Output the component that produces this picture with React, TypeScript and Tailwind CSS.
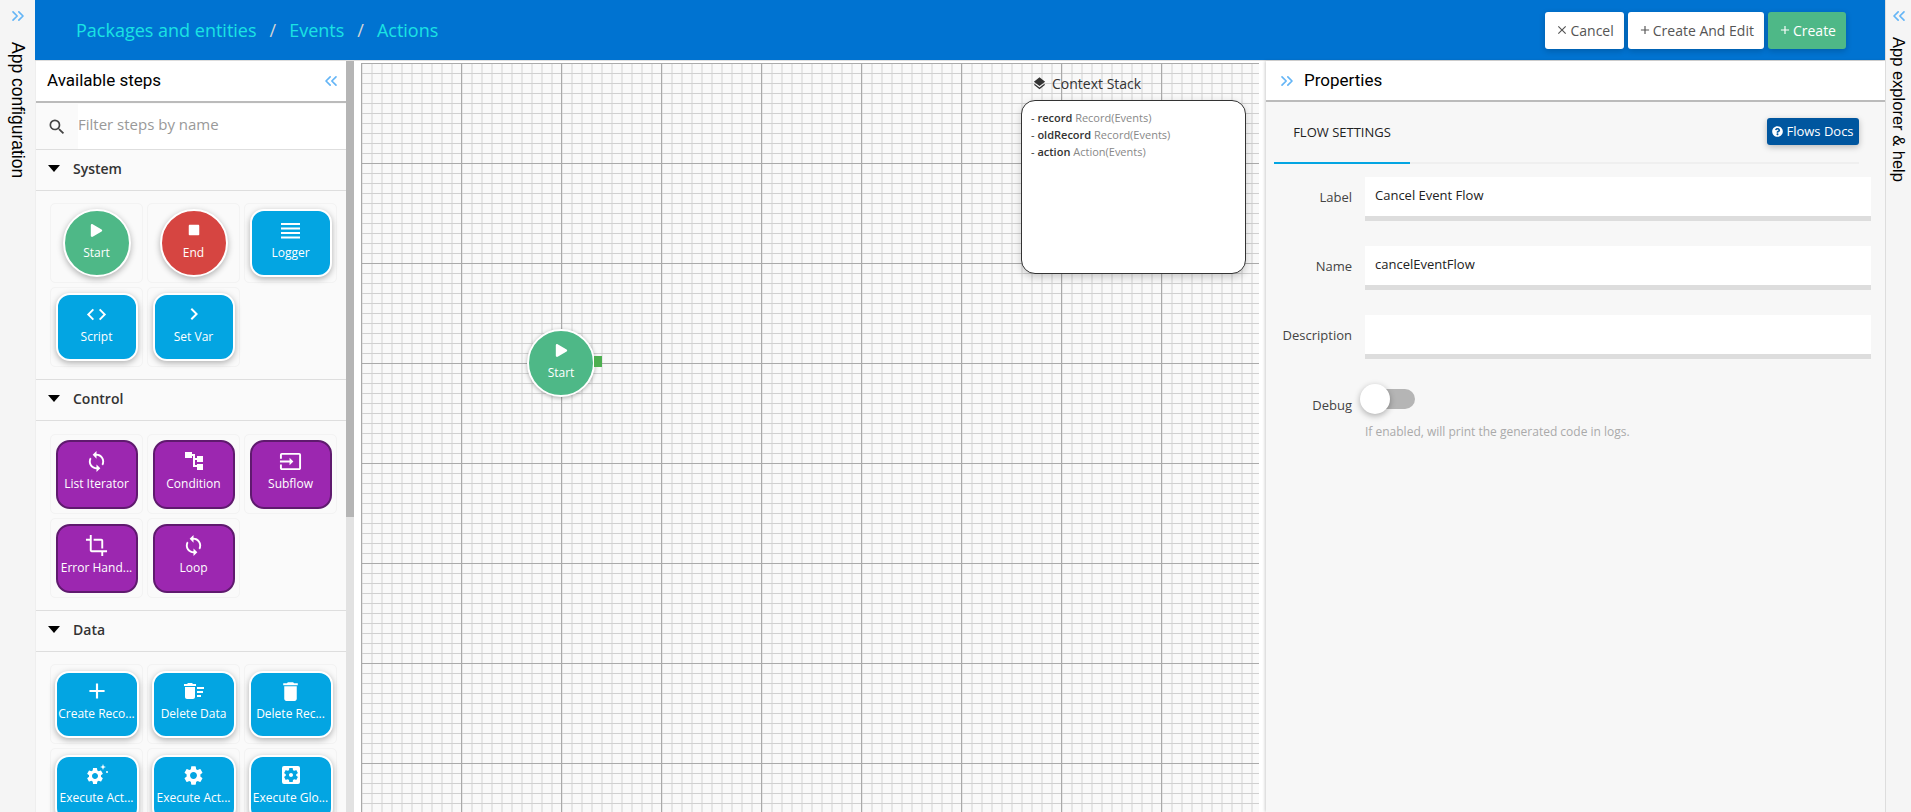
import React from 'react';
import { ChevronsLeft, ChevronsRight } from 'lucide-react';
import { FaPlay, FaStop, FaQuestionCircle } from 'react-icons/fa';
import {
  MdAdd, MdChevronRight, MdClose, MdCode, MdCrop, MdDelete, MdDeleteSweep, MdInput,
  MdLayers, MdSearch, MdSettings, MdSettingsApplications, MdSync,
} from 'react-icons/md';

type StepProps = {
  label: string;
  icon: React.ReactNode;
  kind: 'start' | 'end' | 'blue' | 'purple' | 'data';
};

const tileClass = {
  start: 'w-[68px] h-[68px] rounded-full bg-[#4eb887] border-2 border-white shadow-[0_2px_6px_rgba(0,0,0,0.3)]',
  end: 'w-[68px] h-[68px] rounded-full bg-[#d64541] border-2 border-white shadow-[0_2px_6px_rgba(0,0,0,0.3)]',
  blue: 'w-[82px] h-[68px] rounded-[14px] bg-[#03a5e2] border-2 border-white shadow-[0_2px_6px_rgba(0,0,0,0.3)]',
  purple: 'w-[82px] h-[69px] rounded-[14px] bg-[#9c27b0] border-2 border-[#5f1a6e]',
  data: 'w-[84px] h-[67px] rounded-[14px] bg-[#03a5e2] border-2 border-white shadow-[0_2px_6px_rgba(0,0,0,0.3)]',
};

const LinesIcon = () => (
  <svg width="19" height="17" viewBox="0 0 19 17" fill="currentColor">
    <rect y="1" width="19" height="2" />
    <rect y="5.5" width="19" height="2" />
    <rect y="10" width="19" height="2" />
    <rect y="14.5" width="19" height="2" />
  </svg>
);

const ConditionIcon = () => (
  <svg width="20" height="20" viewBox="0 0 20 20" fill="currentColor">
    <rect x="1" y="1" width="7" height="6" />
    <rect x="8" y="3" width="3" height="2" />
    <rect x="9" y="3" width="2" height="13" />
    <rect x="11" y="7" width="2" height="2" />
    <rect x="11" y="14" width="2" height="2" />
    <rect x="13" y="5" width="6" height="6" />
    <rect x="13" y="13" width="6" height="6" />
  </svg>
);

const SparkleGear = () => (
  <div className="relative w-[24px] h-[22px]">
    <MdSettings size={20} className="absolute left-0 bottom-0" />
    <svg width="9" height="10" viewBox="0 0 9 10" fill="currentColor" className="absolute right-0 top-0">
      <path d="M3 0l.8 2.200L6 3l-2.200.8L3 6l-.8-2.200L0 3l2.200-.8z" />
      <circle cx="7" cy="8" r="1" />
    </svg>
  </div>
);

const Step = ({ label, icon, kind }: StepProps) => (
  <div className="w-[93px] h-[80px] flex items-center justify-center rounded-[5px] border border-[#f3f3f3]">
    <div className={`${tileClass[kind]} flex flex-col items-center justify-center text-white shrink-0 pb-[6px]`}>
      <div className="h-[24px] flex items-center justify-center">{icon}</div>
      <div className="mt-[2px] whitespace-nowrap text-center text-[12px] leading-[18px]">{label}</div>
    </div>
  </div>
);

const Section = ({ title, top, children }: { title: string; top: string; children: React.ReactNode }) => (
  <div>
    <div className="h-[42px] flex items-center px-[11px] pb-[3px] border-y border-[#dedede] -mb-px">
      <span className="w-0 h-0 border-x-[6px] border-x-transparent border-t-[7px] border-t-black mr-[13px] ml-[1px]" />
      <span className="text-[14px] font-semibold text-[#333]">{title}</span>
    </div>
    <div className={`flex flex-wrap gap-x-[4px] gap-y-[4px] pl-[14px] pb-[12px] ${top}`}>{children}</div>
  </div>
);

const Field = ({ label, value }: { label: string; value?: string }) => (
  <div className="flex mb-[25px]">
    <label className="w-[86px] text-right text-[13px] text-[#444] pt-[11px]">{label}</label>
    <div className="ml-[13px] w-[506px] h-[44px] bg-white border-b-[5px] border-[#dddddd] px-[10px] pt-[9px] text-[13px] text-[#222]">
      {value}
    </div>
  </div>
);

const btn = 'h-[37px] px-[10px] rounded-[3px] flex items-center gap-[1px] text-[14px] shadow-[0_2px_6px_rgba(0,0,0,0.2)]';

export default function App() {
  return (
    <div className="w-[1911px] h-[812px] overflow-hidden flex bg-white font-['Open_Sans',sans-serif]">
      {/* left strip */}
      <div className="w-[35px] shrink-0 bg-[#f5f5f5] flex flex-col items-center pt-[6px]">
        <ChevronsRight size={20} className="text-[#64b5f6]" />
        <div className="text-[17.5px] text-black [writing-mode:vertical-rl] font-['Liberation_Sans',sans-serif] mt-[16px]">App configuration</div>
      </div>

      <div className="flex-1 min-w-0 flex flex-col">
        <header className="h-[60px] shrink-0 bg-[#0073d1] flex items-center justify-between pl-[41px] pr-[39px]">
          <div className="flex items-center text-[18px] text-[#1be3e3]">
            <span>Packages and entities</span>
            <span className="text-[#d5d5d5] mx-[13px]">/</span>
            <span>Events</span>
            <span className="text-[#d5d5d5] mx-[13px]">/</span>
            <span>Actions</span>
          </div>
          <div className="flex items-center gap-[4px]">
            <button className={`${btn} bg-white text-[#555]`}><MdClose size={14} />Cancel</button>
            <button className={`${btn} bg-white text-[#555]`}><MdAdd size={14} />Create And Edit</button>
            <button className={`${btn} bg-[#4eb887] text-white`}><MdAdd size={14} />Create</button>
          </div>
        </header>

        <div className="flex-1 min-h-0 flex border-t border-[#ddd]">
          {/* steps panel */}
          <aside className="w-[311px] shrink-0 bg-[#fafafa] overflow-hidden border-l border-[#eee]">
            <div className="h-[42px] bg-white border-b-2 border-[#bbb] flex items-center justify-between pl-[11px] pr-[5px]">
              <span className="text-[17px] text-black font-['Roboto',sans-serif]">Available steps</span>
              <ChevronsLeft size={20} className="text-[#64b5f6]" />
            </div>
            <div className="h-[45px] flex bg-white mt-px">
              <div className="w-[42px] flex items-center justify-center bg-[#fafafa]">
                <MdSearch size={20} className="text-[#444]" />
              </div>
              <div className="flex items-center pb-[4px] text-[15px] text-[#999]">Filter steps by name</div>
            </div>
            <Section title="System" top="pt-[13px]">
              <Step kind="start" label="Start" icon={<FaPlay size={13} />} />
              <Step kind="end" label="End" icon={<FaStop size={12} />} />
              <Step kind="blue" label="Logger" icon={<LinesIcon />} />
              <Step kind="blue" label="Script" icon={<MdCode size={23} />} />
              <Step kind="blue" label="Set Var" icon={<MdChevronRight size={24} />} />
            </Section>
            <Section title="Control" top="pt-[14px]">
              <Step kind="purple" label="List Iterator" icon={<MdSync size={23} />} />
              <Step kind="purple" label="Condition" icon={<ConditionIcon />} />
              <Step kind="purple" label="Subflow" icon={<MdInput size={23} />} />
              <Step kind="purple" label="Error Hand..." icon={<MdCrop size={23} />} />
              <Step kind="purple" label="Loop" icon={<MdSync size={23} />} />
            </Section>
            <Section title="Data" top="pt-[13px]">
              <Step kind="data" label="Create Reco..." icon={<MdAdd size={26} />} />
              <Step kind="data" label="Delete Data" icon={<MdDeleteSweep size={24} />} />
              <Step kind="data" label="Delete Rec..." icon={<MdDelete size={25} />} />
              <Step kind="data" label="Execute Act..." icon={<SparkleGear />} />
              <Step kind="data" label="Execute Act..." icon={<MdSettings size={23} />} />
              <Step kind="data" label="Execute Glo..." icon={<MdSettingsApplications size={24} />} />
            </Section>
          </aside>

          {/* scrollbar */}
          <div className="w-[8px] shrink-0 bg-[#e2e2e2]">
            <div className="h-[456px] bg-[#b5b5b5]" />
          </div>

          {/* canvas */}
          <div className="flex-1 min-w-0 pl-[7px] pr-[7px] pt-[2px]">
            <div className="relative h-full bg-[#f9f9f9] bg-[linear-gradient(#aaaaaa_1px,transparent_1px),linear-gradient(90deg,#aaaaaa_1px,transparent_1px),linear-gradient(#d0d0d0_1px,transparent_1px),linear-gradient(90deg,#e6e6e6_2px,transparent_2px)] bg-[size:100px_100px,100px_100px,10px_10px,10px_10px]">
              <div className="absolute left-[671px] top-[10px] flex items-center gap-[5px] text-[14px] text-[#333]">
                <MdLayers size={15} />
                <span>Context Stack</span>
              </div>
              <div className="absolute left-[660px] top-[37px] w-[225px] h-[174px] bg-white border border-[#333] rounded-[14px] shadow-[0_3px_8px_rgba(0,0,0,0.2)] px-[9px] pt-[8px] text-[11px] leading-[17px] text-[#333]">
                <div>- <b className="font-semibold">record</b> <span className="text-[#888]">Record(Events)</span></div>
                <div>- <b className="font-semibold">oldRecord</b> <span className="text-[#888]">Record(Events)</span></div>
                <div>- <b className="font-semibold">action</b> <span className="text-[#888]">Action(Events)</span></div>
              </div>
              <div className="absolute left-[166px] top-[266px] w-[68px] h-[68px] rounded-full bg-[#4eb887] border-2 border-white shadow-[0_1px_4px_rgba(0,0,0,0.3)] flex flex-col items-center justify-center text-white pb-[6px]">
                <div className="h-[24px] flex items-center"><FaPlay size={13} /></div>
                <div className="mt-[2px] text-[12px] leading-[18px]">Start</div>
              </div>
              <div className="absolute left-[233px] top-[293px] w-[8px] h-[11px] bg-[#4caf50]" />
            </div>
          </div>

          {/* properties */}
          <section className="w-[619px] shrink-0 flex flex-col bg-[#f7f7f7] shadow-[-1px_0_3px_rgba(0,0,0,0.2)]">
            <div className="h-[41px] shrink-0 bg-white border-b-2 border-[#bbb] flex items-center pl-[11px]">
              <ChevronsRight size={20} className="text-[#64b5f6]" />
              <span className="ml-[7px] text-[17px] text-black font-['Roboto',sans-serif]">Properties</span>
            </div>
            <div className="mx-[8px] flex items-start justify-between border-b-[2px] border-[#efefef] h-[62px] w-[585px]">
              <div className="w-[136px] h-[62px] flex items-center justify-center border-b-[2px] border-[#03a5e2] -mb-[2px] text-[13px] font-medium text-[#222] pt-[2px]">
                FLOW SETTINGS
              </div>
              <button className="mt-[16px] h-[27px] w-[92px] rounded-[3px] bg-[#00569f] text-white text-[13px] flex items-center justify-center gap-[3px] shadow-[0_2px_6px_rgba(0,0,0,0.25)]">
                <FaQuestionCircle size={11} />Flows Docs
              </button>
            </div>
            <div className="pt-[13px]">
              <Field label="Label" value="Cancel Event Flow" />
              <Field label="Name" value="cancelEventFlow" />
              <Field label="Description" />
              <div className="flex items-start">
                <label className="w-[86px] text-right text-[13px] text-[#444] pt-[12px]">Debug</label>
                <div className="ml-[8px]">
                  <div className="relative w-[55px] h-[30px] flex items-center">
                    <div className="ml-[5px] w-[50px] h-[20px] rounded-full bg-[#b5b5b5]" />
                    <div className="absolute left-0 top-0 w-[30px] h-[30px] rounded-full bg-white shadow-[0_2px_6px_rgba(0,0,0,0.3)]" />
                  </div>
                  <div className="ml-[5px] mt-[9px] text-[12px] text-[#aaa]">If enabled, will print the generated code in logs.</div>
                </div>
              </div>
            </div>
          </section>
        </div>
      </div>

      {/* right strip */}
      <div className="w-[26px] shrink-0 bg-[#f5f5f5] border-l border-[#ddd] flex flex-col items-center pt-[6px]">
        <ChevronsLeft size={20} className="text-[#64b5f6]" />
        <div className="text-[16.5px] text-black [writing-mode:vertical-rl] font-['Liberation_Sans',sans-serif] mt-[11px]">App explorer &amp; help</div>
      </div>
    </div>
  );
}
